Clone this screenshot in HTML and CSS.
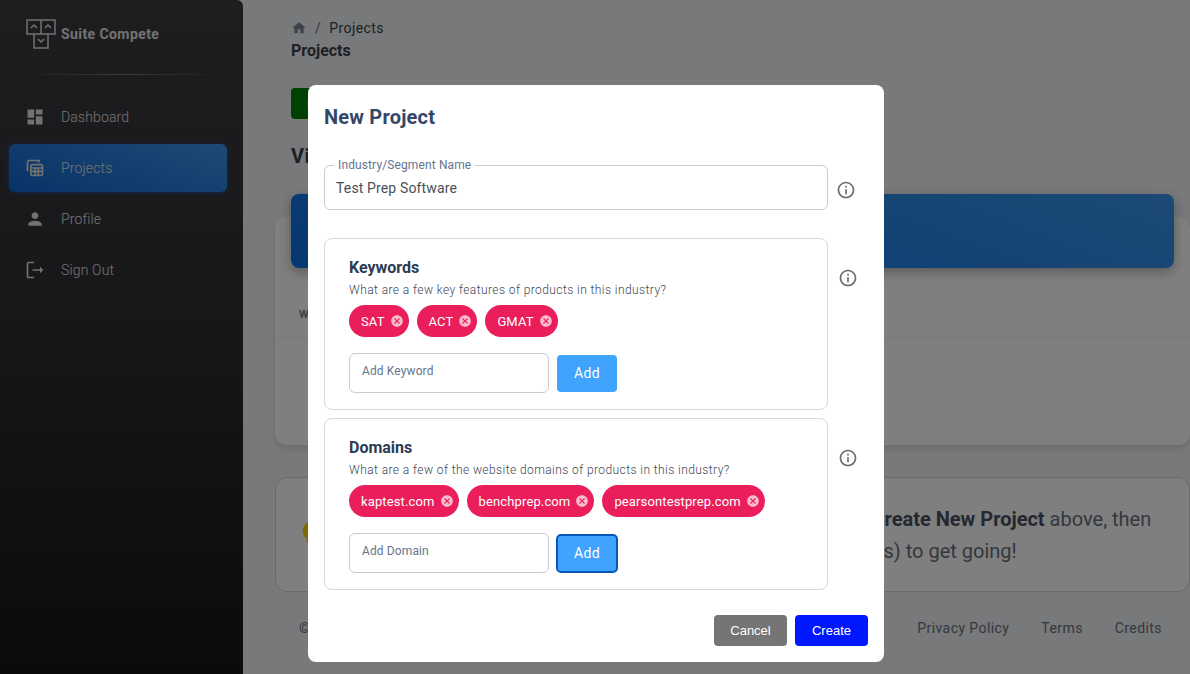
FILE: index.html
```html
<!DOCTYPE html>
<html lang="en">

<head>
    <meta charset="UTF-8">
    <meta name="viewport" content="width=device-width, initial-scale=1.0">
    <title>Suite Compete - Projects</title>
    <link rel="stylesheet" href="styles.css">
</head>

<body>

    <!-- Shared icon shapes -->
    <svg class="sprite" aria-hidden="true">
        <symbol id="icon-info" viewBox="0 0 24 24">
            <path d="M11 7h2v2h-2zm0 4h2v6h-2zm1-9C6.48 2 2 6.48 2 12s4.48 10 10 10 10-4.48 10-10S17.52 2 12 2zm0 18c-4.41 0-8-3.590-8-8s3.590-8 8-8 8 3.590 8 8-3.590 8-8 8z"/>
        </symbol>
        <symbol id="icon-remove" viewBox="0 0 24 24">
            <path d="M12 2C6.470 2 2 6.470 2 12s4.470 10 10 10 10-4.470 10-10S17.530 2 12 2zm5 13.590L15.590 17 12 13.410 8.410 17 7 15.590 10.590 12 7 8.410 8.410 7 12 10.590 15.590 7 17 8.410 13.410 12 17 15.590z"/>
        </symbol>
    </svg>

    <div class="page">
        <aside class="sidebar">
            <a class="brand" href="#">
                <svg class="brand-logo" viewBox="0 0 30 30" fill="none" stroke="currentColor" stroke-width="1.500">
                    <path d="M1 1h14v14H1zM15 1h14v14H15zM8 15h14v14H8z"/>
                    <path d="M5 9l3-3 3 3M19 9l3-3 3 3M12 20l3 3 3-3"/>
                </svg>
                Suite Compete
            </a>
            <hr class="divider">
            <nav class="menu">
                <a class="menu-item" href="#">
                    <svg viewBox="0 0 24 24"><path d="M3 13h8V3H3zm0 8h8v-6H3zm10 0h8V11h-8zm0-18v6h8V3z"/></svg>
                    Dashboard
                </a>
                <a class="menu-item active" href="#">
                    <svg class="line-icon" viewBox="0 0 24 24">
                        <path d="M3 16V5a2 2 0 0 1 2-2h12v2"/>
                        <rect x="7" y="8" width="14" height="13" rx="2"/>
                        <path d="M7 12h14M7 16h14M12 12v9M16 12v9"/>
                    </svg>
                    Projects
                </a>
                <a class="menu-item" href="#">
                    <svg viewBox="0 0 24 24"><path d="M12 12c2.210 0 4-1.790 4-4s-1.790-4-4-4-4 1.790-4 4 1.790 4 4 4zm0 2c-2.670 0-8 1.340-8 4v2h16v-2c0-2.660-5.330-4-8-4z"/></svg>
                    Profile
                </a>
                <a class="menu-item" href="#">
                    <svg viewBox="0 0 24 24"><path d="M4 4h7V2H4C2.900 2 2 2.900 2 4v16c0 1.100.9 2 2 2h7v-2H4zM22 12l-4-4v3H9v2h9v3z"/></svg>
                    Sign Out
                </a>
            </nav>
        </aside>

        <main class="content">
            <header class="topbar">
                <nav class="breadcrumb">
                    <a href="#" aria-label="Home"><svg viewBox="0 0 24 24"><path d="M10 20v-6h4v6h5v-8h3L12 3 2 12h3v8z"/></svg></a>
                    <span class="slash">/</span>
                    <span>Projects</span>
                </nav>
                <h1 class="page-title">Projects</h1>
            </header>

            <button class="create-project" type="button">Create New Project</button>
            <h2 class="section-title">View Projects</h2>

            <section class="card projects-card">
                <div class="card-banner"></div>
                <table class="projects">
                    <thead>
                        <tr>
                            <th>When</th>
                        </tr>
                    </thead>
                </table>
            </section>

            <section class="card hint-card">
                <svg class="hint-icon" viewBox="0 0 24 24"><path d="M9 21c0 .6.400 1 1 1h4c.6 0 1-.4 1-1v-1H9zm3-19C8.100 2 5 5.100 5 9c0 2.400 1.200 4.500 3 5.700V17c0 .6.400 1 1 1h6c.6 0 1-.4 1-1v-2.300c1.800-1.300 3-3.400 3-5.700 0-3.900-3.100-7-7-7z"/></svg>
                <p>You do not have any projects here yet. To start, simply click <strong>Create New Project</strong> above, then<br>
                    select an industry and add your own keyword(s) and domain(s) to get going!</p>
            </section>

            <footer class="footer">
                <span>© Suite Compete</span>
                <nav class="footer-links">
                    <a href="#">Privacy Policy</a>
                    <a href="#">Terms</a>
                    <a href="#">Credits</a>
                </nav>
            </footer>
        </main>
    </div>

    <div class="overlay">
        <form class="dialog" role="dialog" aria-labelledby="dialog-title">
            <h2 class="dialog-title" id="dialog-title">New Project</h2>

            <div class="row name-row">
                <fieldset class="outlined">
                    <legend><label for="name">Industry/Segment Name</label></legend>
                    <input id="name" type="text" value="Test Prep Software">
                </fieldset>
                <button class="info" type="button" aria-label="About the name"><svg><use href="#icon-info"/></svg></button>
            </div>

            <div class="row">
                <section class="panel">
                    <h3>Keywords</h3>
                    <p>What are a few key features of products in this industry?</p>
                    <div class="chips">
                        <span class="chip">SAT <button type="button" aria-label="Remove SAT"><svg><use href="#icon-remove"/></svg></button></span>
                        <span class="chip">ACT <button type="button" aria-label="Remove ACT"><svg><use href="#icon-remove"/></svg></button></span>
                        <span class="chip">GMAT <button type="button" aria-label="Remove GMAT"><svg><use href="#icon-remove"/></svg></button></span>
                    </div>
                    <div class="add-row">
                        <input type="text" placeholder="Add Keyword" aria-label="Add Keyword">
                        <button class="add" type="button">Add</button>
                    </div>
                </section>
                <button class="info" type="button" aria-label="About keywords"><svg><use href="#icon-info"/></svg></button>
            </div>

            <div class="row">
                <section class="panel">
                    <h3>Domains</h3>
                    <p>What are a few of the website domains of products in this industry?</p>
                    <div class="chips">
                        <span class="chip">kaptest.com <button type="button" aria-label="Remove kaptest.com"><svg><use href="#icon-remove"/></svg></button></span>
                        <span class="chip">benchprep.com <button type="button" aria-label="Remove benchprep.com"><svg><use href="#icon-remove"/></svg></button></span>
                        <span class="chip">pearsontestprep.com <button type="button" aria-label="Remove pearsontestprep.com"><svg><use href="#icon-remove"/></svg></button></span>
                    </div>
                    <div class="add-row">
                        <input type="text" placeholder="Add Domain" aria-label="Add Domain">
                        <button class="add focused" type="button">Add</button>
                    </div>
                </section>
                <button class="info" type="button" aria-label="About domains"><svg><use href="#icon-info"/></svg></button>
            </div>

            <div class="actions">
                <button class="cancel" type="button">Cancel</button>
                <button class="create" type="submit">Create</button>
            </div>
        </form>
    </div>

</body>

</html>
```
FILE: styles.css
```css
* {
    box-sizing: border-box;
}

body {
    margin: 0;
    font-family: Roboto, "Liberation Sans", Arial, sans-serif;
    font-size: 14px;
    letter-spacing: 0.03em;
    color: #344767;
    background-color: #f0f2f5;
    overflow: hidden;
}

h1, h2, h3, p {
    margin: 0;
}

a {
    color: inherit;
    text-decoration: none;
}

button, input {
    font: inherit;
}

button {
    border: 0;
    letter-spacing: inherit;
    cursor: pointer;
}

svg {
    display: block;
    fill: currentColor;
}

.sprite {
    display: none;
}

.page {
    display: flex;
    min-height: 100vh;
}

/* Sidebar */
.sidebar {
    flex: 0 0 243px;
    padding: 18px 0;
    border-radius: 0 6px 0 0;
    background: linear-gradient(180deg, #3c3c40 0%, #303034 45%, #161616 100%);
    color: #e4e4e4;
}

.brand {
    display: flex;
    align-items: center;
    gap: 5px;
    height: 32px;
    padding-left: 26px;
    font-weight: 700;
}

.brand-logo {
    width: 30px;
    height: 30px;
    fill: none;
}

.divider {
    height: 1px;
    margin: 24px 20px 18px;
    border: 0;
    background: linear-gradient(to right, transparent, #777, transparent);
}

.menu {
    display: flex;
    flex-direction: column;
    gap: 3px;
    padding: 0 16px 0 9px;
}

.menu-item {
    display: flex;
    align-items: center;
    gap: 16px;
    height: 48px;
    padding-left: 16px;
    border-radius: 6px;
    font-weight: 300;
    letter-spacing: 0.01em;
}

.menu-item svg {
    width: 20px;
    height: 20px;
}

.menu-item .line-icon {
    fill: none;
    stroke: currentColor;
    stroke-width: 2;
}

.menu-item.active {
    background: linear-gradient(20deg, #1066d0, #3994ea);
    box-shadow: 0 1px 4px rgba(16, 102, 208, 0.6);
}

/* Page behind the dialog */
.content {
    flex: 1;
    min-width: 0;
    padding: 18px 0 0 32px;
}

.topbar {
    padding-left: 16px;
}

.breadcrumb {
    display: flex;
    align-items: center;
    gap: 8px;
    height: 20px;
}

.breadcrumb svg {
    width: 16px;
    height: 16px;
    color: #7b8496;
}

.slash {
    color: #6c757d;
}

.page-title {
    font-size: 16px;
    line-height: 26px;
    letter-spacing: 0;
}

.topbar, .section-title {
    color: #3a3f48;
}

.create-project {
    display: block;
    height: 31px;
    margin: 24px 0 0 16px;
    padding: 0 16px;
    border-radius: 4px;
    background-color: #008000;
    color: #fff;
}

.section-title {
    margin: 23px 0 0 16px;
    font-size: 20px;
    line-height: 28px;
}

.card {
    background-color: #fff;
    border-radius: 12px;
}

.projects-card {
    height: 228px;
    margin-top: 47px;
    padding: 0 16px;
    box-shadow: 0 4px 6px rgba(0, 0, 0, 0.1);
}

/* The banner sticks out above its card */
.card-banner {
    position: relative;
    top: -23px;
    height: 74px;
    margin-bottom: 14px;
    border-radius: 8px;
    background: linear-gradient(20deg, #0a6ee6, #3994ea);
    box-shadow: 0 4px 12px rgba(0, 0, 0, 0.3);
}

.projects {
    width: calc(100% + 32px);
    margin: 0 -16px;
    border-collapse: collapse;
}

.projects th {
    height: 32px;
    padding: 0 24px 12px;
    border-bottom: 1px solid #f0f2f5;
    color: #7b809a;
    text-align: left;
    font-size: 11px;
    line-height: 20px;
    text-transform: uppercase;
}

.hint-card {
    display: flex;
    align-items: center;
    gap: 16px;
    height: 115px;
    margin-top: 32px;
    padding: 0 20px;
    border: 1px solid #d2d6da;
    color: #67707f;
    font-size: 20px;
    line-height: 32px;
    letter-spacing: 0;
}

.hint-card strong {
    color: #4a5160;
}

.hint-icon {
    flex: none;
    width: 32px;
    height: 32px;
    color: #ffd800;
}

.hint-card p {
    white-space: nowrap;
}

.footer {
    display: flex;
    justify-content: space-between;
    padding: 25px 28px 0 24px;
    color: #67707f;
    line-height: 22px;
}

.footer-links {
    display: flex;
    gap: 32px;
}

/* Dialog */
.overlay {
    position: fixed;
    inset: 0;
    display: flex;
    justify-content: center;
    align-items: flex-start;
    padding: 85px 0 0 2px;
    background-color: rgba(0, 0, 0, 0.5);
}

.dialog {
    width: 576px;
    padding: 16px;
    border-radius: 8px;
    background-color: #fff;
}

.dialog-title {
    font-size: 20px;
    line-height: 32px;
    letter-spacing: 0.01em;
}

.row {
    display: grid;
    grid-template-columns: 1fr 40px;
    align-items: start;
    margin-bottom: 8px;
}

.name-row {
    margin: 25px 0 28px;
}

.outlined {
    min-width: 0;
    height: 52px;
    margin: 0;
    padding: 0 11px;
    border: 1px solid #c9ccd2;
    border-radius: 6px;
}

.outlined legend {
    margin-left: -2px;
    padding: 0 4px;
    font-size: 12px;
    line-height: 14px;
    letter-spacing: 0.01em;
    color: #67748e;
}

.outlined input {
    width: 100%;
    height: 32px;
    padding: 0;
    border: 0;
    outline: 0;
    color: #495057;
    letter-spacing: 0.01em;
}

.info {
    justify-self: center;
    margin-top: 30px;
    padding: 0;
    background: none;
    color: #6b6b6b;
}

.info svg {
    width: 20px;
    height: 20px;
}

.name-row .info {
    justify-self: start;
    margin: 22px 0 0 8px;
}

.panel {
    padding: 16px 24px;
    border: 1px solid #d6d8dc;
    border-radius: 8px;
}

.panel h3 {
    color: #2c3c55;
    font-size: 16px;
    line-height: 26px;
    letter-spacing: 0;
}

.panel p {
    color: #3d4654;
    font-size: 12px;
    line-height: 18px;
    font-weight: 300;
}

.chips {
    display: flex;
    gap: 8px;
    margin: 6px 0 16px;
}

.chip {
    display: flex;
    align-items: center;
    gap: 5px;
    height: 32px;
    padding: 0 5px 0 12px;
    border-radius: 16px;
    background-color: #e91e5b;
    color: #fff;
    font-size: 13px;
    letter-spacing: 0.01em;
}

.chip button {
    padding: 0;
    background: none;
    color: rgba(255, 255, 255, 0.7);
}

.chip svg {
    width: 14px;
    height: 14px;
}

.add-row {
    display: flex;
    align-items: center;
    gap: 8px;
}

.add-row input {
    width: 200px;
    height: 40px;
    padding: 0 12px 4px;
    border: 1px solid #c9ccd2;
    border-radius: 6px;
    font-size: 12px;
    letter-spacing: 0.01em;
}

.add-row input::placeholder {
    color: #67748e;
    opacity: 1;
}

.add {
    width: 60px;
    height: 37px;
    padding: 0;
    border-radius: 4px;
    background-color: #40a3fd;
    color: #fff;
}

.add.focused {
    outline: 2px solid #0657b8;
    outline-offset: -1px;
}

.actions {
    display: flex;
    justify-content: flex-end;
    gap: 8px;
    margin-top: 25px;
}

.actions button {
    min-width: 73px;
    height: 31px;
    padding: 0 15px;
    border-radius: 4px;
    background-color: #757575;
    color: #fff;
    font-family: "Liberation Sans", Arial, sans-serif;
    font-size: 13px;
    letter-spacing: 0;
}

.actions .create {
    background-color: #0018ff;
}
```
